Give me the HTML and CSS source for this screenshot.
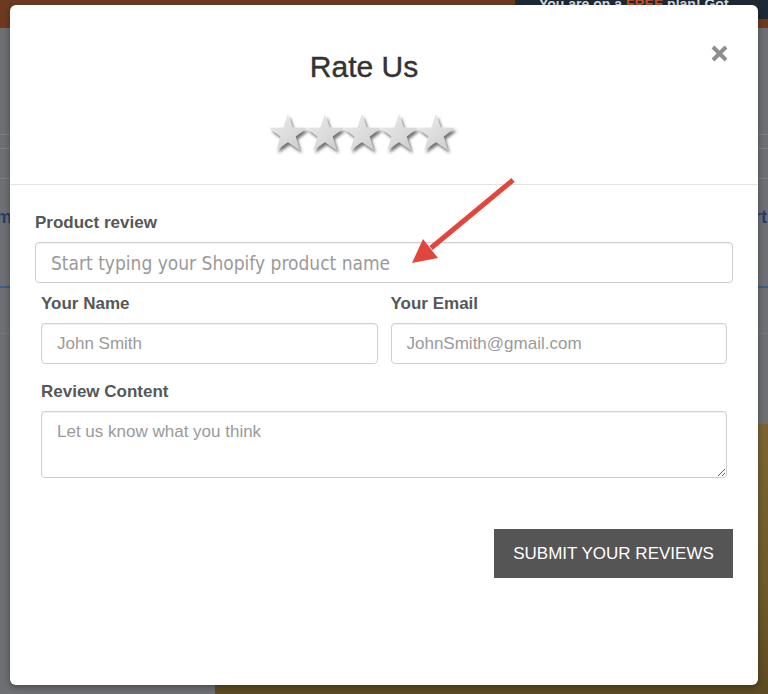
FILE: index.html
```html
<!DOCTYPE html>
<html lang="en">
<head>
<meta charset="utf-8">
<title>Rate Us</title>
<link rel="stylesheet" href="styles.css">
</head>
<body>
<div class="page">
  <header class="topbar">
    <div class="notice">You are on a <b class="free">FREE</b> plan! Got</div>
  </header>
  <div class="bg-rows">
    <div class="bg-row tall"></div>
    <div class="bg-row thin"></div>
    <div class="bg-row mid"></div>
    <div class="bg-nav"><span class="nav-left">Form</span><span class="nav-right">Report</span></div>
    <div class="bg-row list"></div>
  </div>
  <div class="bg-lower">
    <div class="bg-left"></div>
    <div class="bg-banner"></div>
  </div>
</div>

<div class="modal" role="dialog" aria-labelledby="rate-title">
  <div class="modal-header">
    <h2 class="title" id="rate-title">Rate Us</h2>
    <div class="stars">
      <svg width="194" height="46" viewBox="0 0 194 46" aria-label="rating stars">
        <defs>
          <linearGradient id="sg" x1="0" y1="0" x2="1" y2="1">
            <stop offset="0" stop-color="#ececec"/>
            <stop offset="0.6" stop-color="#dadada"/>
            <stop offset="1" stop-color="#c9c9c9"/>
          </linearGradient>
          <filter id="sh" x="-20%" y="-20%" width="150%" height="150%">
            <feDropShadow dx="2" dy="3" stdDeviation="1.6" flood-color="#444" flood-opacity="0.75"/>
          </filter>
          <polygon id="star" points="20,1 24.7,14.5 39,14.8 27.6,23.5 31.8,37.2 20,29 8.2,37.2 12.4,23.5 1,14.8 15.3,14.5"/>
        </defs>
        <g fill="url(#sg)" filter="url(#sh)">
          <use href="#star" x="0"/>
          <use href="#star" x="37"/>
          <use href="#star" x="74"/>
          <use href="#star" x="111"/>
          <use href="#star" x="148"/>
        </g>
      </svg>
    </div>
    <button class="close" type="button" aria-label="Close">
      <svg width="17" height="17" viewBox="0 0 17 17"><path d="M2 2L15 15M15 2L2 15" stroke="#8e8e8e" stroke-width="4"/></svg>
    </button>
  </div>

  <form class="modal-body">
    <label class="field-label" for="product">Product review</label>
    <input class="field product" id="product" type="text" placeholder="Start typing your Shopify product name">

    <div class="row">
      <div class="col">
        <label class="field-label" for="name">Your Name</label>
        <input class="field" id="name" type="text" placeholder="John Smith">
      </div>
      <div class="col">
        <label class="field-label" for="email">Your Email</label>
        <input class="field" id="email" type="email" placeholder="JohnSmith@gmail.com">
      </div>
    </div>

    <div class="group">
      <label class="field-label" for="content">Review Content</label>
      <textarea class="field area" id="content" placeholder="Let us know what you think"></textarea>
    </div>

    <div class="actions">
      <button class="submit" type="button">Submit your reviews</button>
    </div>
  </form>

  <svg class="arrow" width="115" height="95" viewBox="0 0 115 95" aria-hidden="true">
    <line x1="108" y1="5" x2="26" y2="73" stroke="#e0463b" stroke-width="5"/>
    <polygon points="7,88 18,64 33,83" fill="#e0463b"/>
  </svg>
</div>
</body>
</html>
```

FILE: styles.css
```css
* { box-sizing: border-box; }

html, body {
  margin: 0;
  padding: 0;
}

body {
  width: 768px;
  height: 694px;
  overflow: hidden;
  position: relative;
  background: #6d6f72;
  font-family: "Liberation Sans", Arial, sans-serif;
}

/* ---------- background page (dimmed) ---------- */
.page {
  display: flex;
  flex-direction: column;
  height: 694px;
}

.topbar {
  height: 28px;
  background: #6c3a1f;
  display: flex;
  justify-content: flex-end;
  align-items: flex-start;
}

.notice {
  width: 253px;
  height: 19px;
  background: #1d2a33;
  color: #d8dde2;
  font-size: 14px;
  font-weight: bold;
  line-height: 8px;
  padding-left: 24px;
  white-space: nowrap;
  overflow: hidden;
}

.free { color: #c0532a; }

.bg-rows {
  display: flex;
  flex-direction: column;
}

.bg-row { border-bottom: 1px solid #7b7d80; }
.bg-row.tall { height: 107px; }
.bg-row.thin { height: 14px; }
.bg-row.mid { height: 30px; }
.bg-row.list { height: 46px; border-bottom-color: #76787b; }

.bg-nav {
  height: 109px;
  display: flex;
  justify-content: space-between;
  align-items: flex-start;
  padding-top: 28px;
  border-bottom: 2px solid #3d5f85;
  color: #24406a;
  font-weight: bold;
  font-size: 18px;
}

.nav-left { margin-left: -33px; }
.nav-right { margin-right: 1px; }

.bg-lower {
  flex: 1;
  display: flex;
  padding-top: 90px;
}

.bg-left { width: 215px; }

.bg-banner {
  flex: 1;
  background: linear-gradient(180deg, #7a6532 0%, #6f5a2b 60%, #5c4a24 100%);
}

/* ---------- modal ---------- */
.modal {
  position: absolute;
  left: 10px;
  top: 5px;
  width: 748px;
  height: 680px;
  background: #fff;
  border-radius: 6px;
  box-shadow: 0 2px 6px rgba(0, 0, 0, 0.35);
}

.modal-header {
  position: relative;
  padding: 45px 40px 27px 0;
  border-bottom: 1px solid #e3e3e3;
  text-align: center;
}

.title {
  margin: 0;
  font-size: 30px;
  line-height: 33px;
  font-weight: normal;
  color: #333;
  -webkit-text-stroke: 0.4px #333;
}

.stars {
  margin-top: 30px;
  height: 44px;
  display: flex;
  justify-content: center;
}

.stars svg { display: block; margin-left: 2px; }

.close {
  position: absolute;
  top: 40px;
  right: 30px;
  width: 17px;
  height: 17px;
  padding: 0;
  border: 0;
  background: none;
  cursor: pointer;
}

.close svg { display: block; }

.modal-body {
  padding: 28px 25px 0 25px;
  margin: 0;
}

.field-label {
  display: block;
  font-size: 17px;
  line-height: 20px;
  font-weight: bold;
  color: #575757;
  margin-bottom: 9px;
}

.field {
  display: block;
  width: 100%;
  height: 41px;
  padding: 0 15px;
  border: 1px solid #cfcfcf;
  border-radius: 4px;
  box-shadow: inset 0 1px 1px rgba(0, 0, 0, 0.06);
  background: #fff;
  font-family: "Liberation Sans", Arial, sans-serif;
  font-size: 17px;
  color: #333;
  outline: none;
}

.field::placeholder { color: #9a9a9a; }

.field.product {
  font-family: "DejaVu Sans Condensed", "DejaVu Sans", sans-serif;
  font-stretch: condensed;
  font-size: 19px;
}

.row {
  display: grid;
  grid-template-columns: 1fr 1fr;
  column-gap: 13px;
  padding: 0 6px;
  margin-top: 11px;
}

.group {
  padding: 0 6px;
  margin-top: 18px;
}

.field.area {
  height: 67px;
  padding: 8px 15px;
  line-height: 24px;
  resize: both;
}

.actions {
  display: flex;
  justify-content: flex-end;
  margin-top: 51px;
}

.submit {
  width: 239px;
  height: 49px;
  border: 0;
  border-radius: 0;
  background: #555;
  color: #fff;
  font-family: "Liberation Sans", Arial, sans-serif;
  font-size: 17px;
  text-transform: uppercase;
  padding: 0;
  cursor: pointer;
}

.arrow {
  position: absolute;
  left: 395px;
  top: 170px;
}
```
